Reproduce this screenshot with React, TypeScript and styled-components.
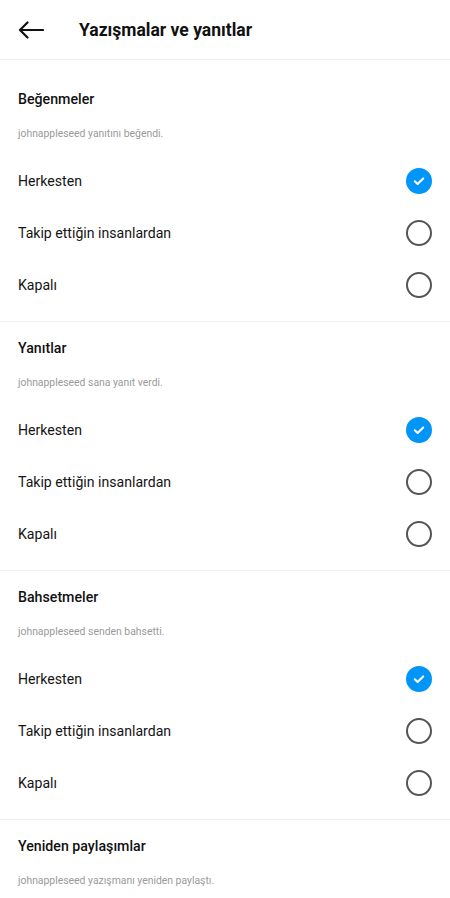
import { createGlobalStyle, styled } from "styled-components";

const GlobalStyle = createGlobalStyle`
  html, body {
    margin: 0;
    padding: 0;
    background: #ffffff;
  }
  body {
    font-family: Roboto, "Noto Sans", "Liberation Sans", sans-serif;
    color: #111;
    -webkit-font-smoothing: antialiased;
  }
`;

type Option = { label: string; checked?: boolean };

type Section = {
  title: string;
  hint: string;
  options: Option[];
};

const defaultOptions = (): Option[] => [
  { label: "Herkesten", checked: true },
  { label: "Takip ettiğin insanlardan" },
  { label: "Kapalı" },
];

const sections: Section[] = [
  {
    title: "Beğenmeler",
    hint: "johnappleseed yanıtını beğendi.",
    options: defaultOptions(),
  },
  {
    title: "Yanıtlar",
    hint: "johnappleseed sana yanıt verdi.",
    options: defaultOptions(),
  },
  {
    title: "Bahsetmeler",
    hint: "johnappleseed senden bahsetti.",
    options: defaultOptions(),
  },
  {
    title: "Yeniden paylaşımlar",
    hint: "johnappleseed yazışmanı yeniden paylaştı.",
    options: [],
  },
];

const BackArrow = () => (
  <svg width="26" height="18" viewBox="0 0 26 18" fill="none">
    <path
      d="M25 9H2M9.5 1.5L2 9l7.5 7.5"
      stroke="#111"
      strokeWidth="2.2"
      strokeLinecap="round"
      strokeLinejoin="round"
    />
  </svg>
);

const CheckMark = () => (
  <svg width="14" height="14" viewBox="0 0 14 14" fill="none">
    <path
      d="M2.8 7.3l2.8 2.7L11.2 4.4"
      stroke="#fff"
      strokeWidth="2.1"
      strokeLinecap="round"
      strokeLinejoin="round"
    />
  </svg>
);

const App = () => {
  return (
    <Page>
      <GlobalStyle />
      <Header>
        <BackButton>
          <BackArrow />
        </BackButton>
        <HeaderTitle>Yazışmalar ve yanıtlar</HeaderTitle>
      </Header>
      {sections.map((section, idx) => (
        <SettingsSection key={section.title} $first={idx === 0}>
          <SectionTitle>{section.title}</SectionTitle>
          <SectionHint>{section.hint}</SectionHint>
          {section.options.length > 0 && (
            <OptionList>
              {section.options.map((opt) => (
                <OptionRow key={opt.label}>
                  <OptionLabel>{opt.label}</OptionLabel>
                  <Radio $checked={!!opt.checked}>
                    {opt.checked && <CheckMark />}
                  </Radio>
                </OptionRow>
              ))}
            </OptionList>
          )}
        </SettingsSection>
      ))}
    </Page>
  );
};

export default App;

const Page = styled.div`
  width: 450px;
  height: 898px;
  overflow: hidden;
  background: #fff;
`;

const Header = styled.header`
  height: 59px;
  display: flex;
  align-items: center;
  padding: 0 18px;
  border-bottom: 1px solid #efefef;
`;

const BackButton = styled.div`
  width: 26px;
  height: 18px;
  display: flex;
  align-items: center;
  margin-right: 35px;
`;

const HeaderTitle = styled.h1`
  margin: 0;
  font-size: 17.5px;
  font-weight: 700;
  color: #111;
`;

const SettingsSection = styled.section<{ $first: boolean }>`
  padding: ${(p) => (p.$first ? "27px" : "14px")} 18px 10px;
  border-bottom: 1px solid #efefef;

  &:last-child {
    border-bottom: none;
  }
`;

const SectionTitle = styled.h2`
  margin: 0;
  height: 24px;
  line-height: 24px;
  font-size: 14.2px;
  font-weight: 500;
  color: #111;
`;

const SectionHint = styled.p`
  margin: 16px 0 14px;
  height: 14px;
  line-height: 14px;
  font-size: 10.4px;
  color: #9a9a9a;
`;

const OptionList = styled.div`
  display: flex;
  flex-direction: column;
`;

const OptionRow = styled.div`
  height: 52px;
  display: flex;
  align-items: center;
  justify-content: space-between;
`;

const OptionLabel = styled.span`
  font-size: 14.1px;
  color: #151515;
`;

const Radio = styled.div<{ $checked: boolean }>`
  width: 26px;
  height: 26px;
  box-sizing: border-box;
  border-radius: 50%;
  display: flex;
  align-items: center;
  justify-content: center;
  border: ${(p) => (p.$checked ? "none" : "2px solid #555")};
  background: ${(p) => (p.$checked ? "#0095f6" : "transparent")};
`;
